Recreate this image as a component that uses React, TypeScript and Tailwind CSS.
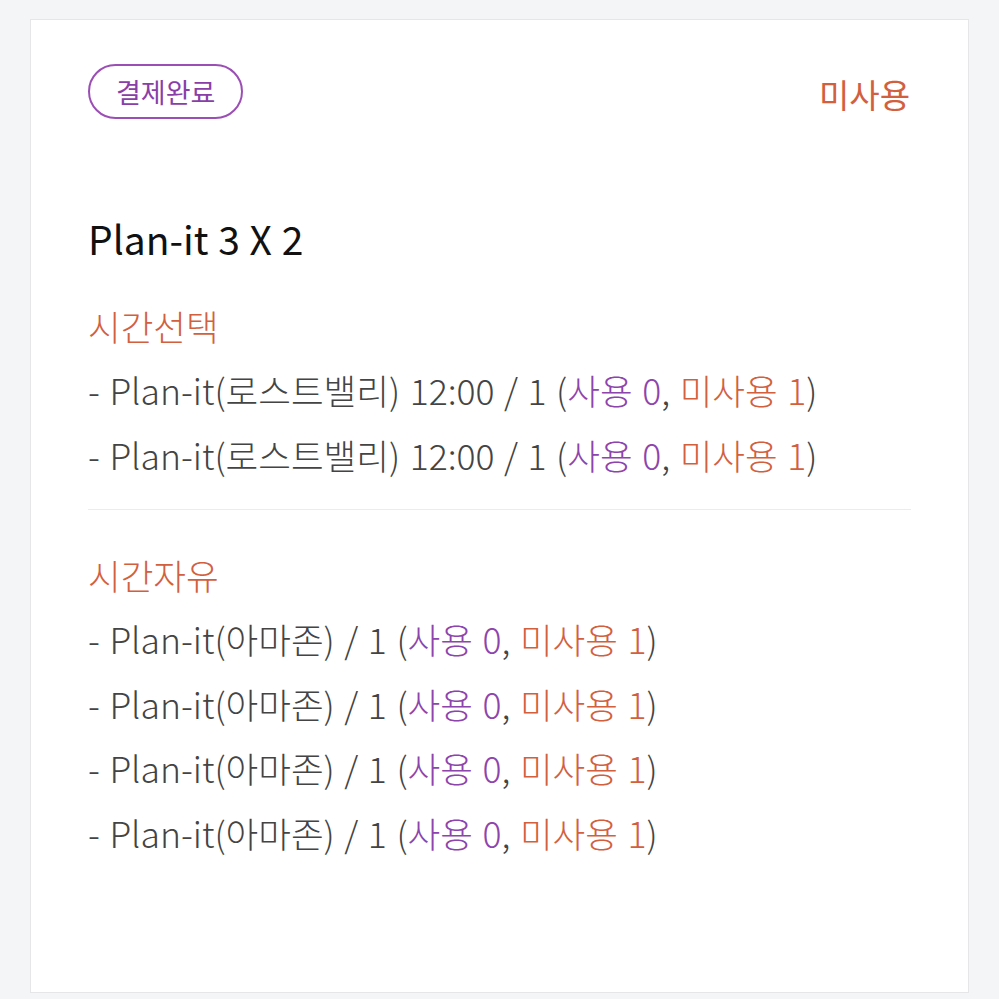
import React from 'react';

type Item = { name: string; time?: string; qty: number; used: number; unused: number };

const selectItems: Item[] = [
  { name: 'Plan-it(로스트밸리)', time: '12:00', qty: 1, used: 0, unused: 1 },
  { name: 'Plan-it(로스트밸리)', time: '12:00', qty: 1, used: 0, unused: 1 },
];

const freeItems: Item[] = [
  { name: 'Plan-it(아마존)', qty: 1, used: 0, unused: 1 },
  { name: 'Plan-it(아마존)', qty: 1, used: 0, unused: 1 },
  { name: 'Plan-it(아마존)', qty: 1, used: 0, unused: 1 },
  { name: 'Plan-it(아마존)', qty: 1, used: 0, unused: 1 },
];

const ItemLine = ({ item }: { item: Item }) => (
  <p className="h-[64.5px] leading-[64.5px] text-[35.5px] font-light text-[#444] whitespace-nowrap [word-spacing:1.7px]">
    - {item.name} {item.time ? `${item.time} ` : ''}/ {item.qty} (
    <span className="text-[#8e44ad]">사용 {item.used}</span>,{' '}
    <span className="text-[#d2603f]">미사용 {item.unused}</span>)
  </p>
);

const App: React.FC = () => {
  return (
    <div
      className="min-h-[999px] w-[999px] bg-[#f4f5f7] pt-[19px] pl-[30px]"
      style={{ fontFamily: '"Noto Sans CJK KR", "Noto Sans", sans-serif' }}
    >
      <div className="w-[939px] h-[974px] bg-white border border-[#e6e6e8] px-[57px] pt-[44px]">
        <div className="flex items-center justify-between">
          <span className="h-[55px] px-[26px] rounded-full border-2 border-[#9b4fb5] text-[#8a3fa8] text-[27px] leading-[51px]">
            결제완료
          </span>
          <span className="text-[#d2603f] text-[33px] leading-none mr-[1px] mt-[6px]">미사용</span>
        </div>

        <h2 className="mt-[87px] h-[64px] leading-[64px] text-[39px] text-[#111] [word-spacing:1px]">Plan-it 3 X 2</h2>

        <div className="mt-[24px]">
          <h3 className="h-[64px] leading-[64px] text-[35.5px] font-light text-[#d2603f]">시간선택</h3>
          {selectItems.map((item, i) => (
            <ItemLine key={i} item={item} />
          ))}
        </div>

        <div className="mt-[22px] border-t border-[#ececec]" />

        <div className="mt-[33px]">
          <h3 className="h-[64px] leading-[64px] text-[35.5px] font-light text-[#d2603f]">시간자유</h3>
          {freeItems.map((item, i) => (
            <ItemLine key={i} item={item} />
          ))}
        </div>
      </div>
    </div>
  );
};

export default App;
